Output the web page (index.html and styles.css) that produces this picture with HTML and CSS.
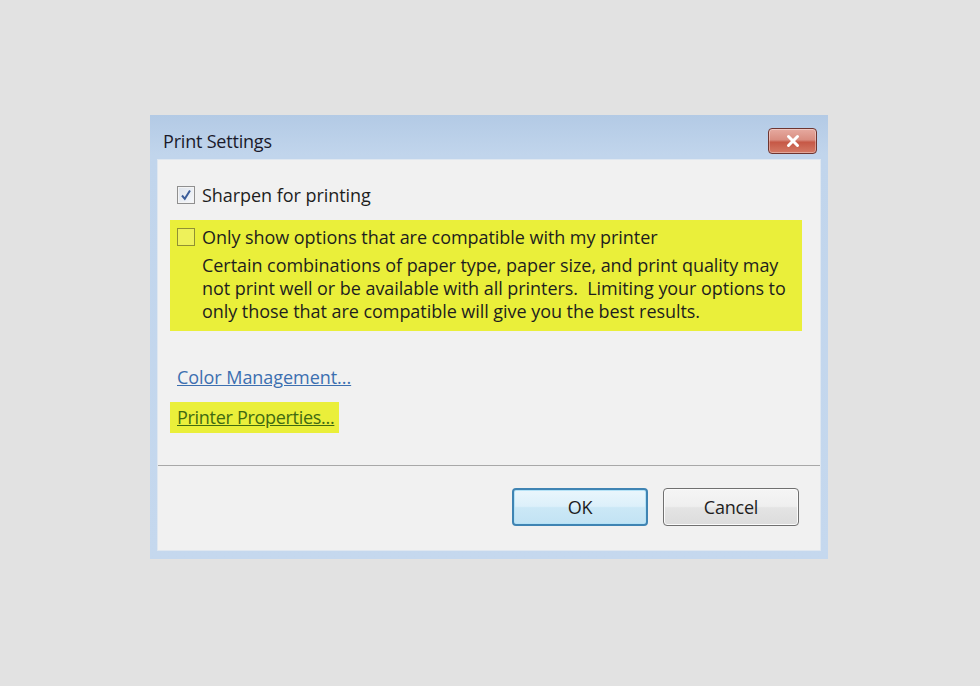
FILE: index.html
```html
<!DOCTYPE html>
<html>
<head>
<meta charset="utf-8">
<link rel="stylesheet" href="styles.css">
</head>
<body>
<div class="stage">
  <div class="window">
    <div class="titlebar">
      <span class="title">Print Settings</span>
      <div class="close"><svg width="18" height="14" viewBox="0 0 18 14"><path d="M4.5 2.5 L13.5 11.5 M13.5 2.5 L4.5 11.5" stroke="#ffffff" stroke-width="3" stroke-linecap="round"/></svg></div>
    </div>
    <div class="content">
      <div class="main">
        <label class="row sharpen">
          <span class="check checked"><svg width="12" height="12" viewBox="0 0 12 12"><path d="M2 6.5 L4.8 9.8 L10 1.5" fill="none" stroke="#3b5d9a" stroke-width="2"/></svg></span>
          <span>Sharpen for printing</span>
        </label>
        <div class="highlight box">
          <div class="row">
            <span class="check empty"></span>
            <span>Only show options that are compatible with my printer</span>
          </div>
          <p class="desc">Certain combinations of paper type, paper size, and print quality may not print well or be available with all printers.&nbsp; Limiting your options to only those that are compatible will give you the best results.</p>
        </div>
        <a class="link color">Color Management...</a>
        <div class="highlight linkbox"><a class="link printer">Printer Properties...</a></div>
      </div>
      <div class="footer">
        <button class="btn ok">OK</button>
        <button class="btn cancel">Cancel</button>
      </div>
    </div>
  </div>
</div>
</body>
</html>
```

FILE: styles.css
```css
html, body {
  margin: 0;
  padding: 0;
}
body {
  background: #e2e2e2;
  width: 980px;
  height: 686px;
  overflow: hidden;
  font-family: "Open Sans", "Noto Sans", sans-serif;
  color: #1e1e1e;
}
.stage {
  padding: 115px 0 0 150px;
}
.window {
  width: 678px;
  height: 444px;
  box-sizing: border-box;
  background: linear-gradient(to bottom, #b3cae5 0%, #c1d5ec 40px, #c5d8ee 100%);
  display: flex;
  flex-direction: column;
  padding: 0 7px 8px 7px;
}
.titlebar {
  height: 44px;
  box-sizing: border-box;
  padding: 8px 4px 0 6px;
  display: flex;
  align-items: center;
  justify-content: space-between;
}
.title {
  font-size: 18px;
  color: #1a1a2a;
  letter-spacing: -0.2px;
}
.close {
  width: 49px;
  height: 26px;
  box-sizing: border-box;
  border: 1px solid #6e3530;
  border-radius: 4px;
  background: linear-gradient(to bottom, #e6aaa0 0%, #d98d80 45%, #c65846 55%, #d47a66 100%);
  display: flex;
  align-items: center;
  justify-content: center;
  box-shadow: inset 0 0 0 1px rgba(255,255,255,0.35);
}
.content {
  flex: 1;
  background: #f1f1f1;
  border: 1px solid #dfe7f0;
  display: flex;
  flex-direction: column;
}
.main {
  flex: 1;
  border-bottom: 1px solid #a8a8a8;
  padding-top: 25px;
  padding-left: 19px;
  display: flex;
  flex-direction: column;
  align-items: flex-start;
}
.row {
  display: flex;
  align-items: center;
  font-size: 18px;
  letter-spacing: -0.05px;
  height: 20px;
}
.check {
  width: 18px;
  height: 18px;
  box-sizing: border-box;
  margin-right: 7px;
  display: flex;
  align-items: center;
  justify-content: center;
}
.check.checked {
  border: 1px solid #8f8f8f;
  background: linear-gradient(to bottom right, #dde3ec, #f6f8fb);
  box-shadow: inset 0 0 0 1px #f4f4f4;
}
.check.empty {
  border: 1px solid #909033;
  background: #eef15a;
}
.highlight {
  background: #eaef3a;
}
.box {
  margin-top: 15px;
  margin-left: -7px;
  width: 632px;
  box-sizing: border-box;
  padding: 7px 10px 0 7px;
  height: 111px;
}
.desc {
  margin: 7px 0 0 25px;
  width: 596px;
  font-size: 18px;
  letter-spacing: -0.05px;
  line-height: 23px;
  color: #1e1e1e;
}
.link {
  font-size: 18px;
  letter-spacing: -0.05px;
  text-decoration: underline;
  cursor: pointer;
}
.color {
  margin-top: 34px;
  color: #3c6fb0;
}
.linkbox {
  margin-top: 13px;
  margin-left: -7px;
  padding: 3px 5px 4px 7px;
}
.printer {
  color: #3f6a12;
  letter-spacing: -0.3px;
}
.footer {
  height: 84px;
  display: flex;
  justify-content: flex-end;
  align-items: flex-start;
  padding-top: 22px;
  padding-right: 21px;
  box-sizing: border-box;
  gap: 15px;
}
.btn {
  width: 136px;
  height: 38px;
  font-family: "Open Sans", "Noto Sans", sans-serif;
  font-size: 18px;
  color: #1e1e1e;
  border-radius: 4px;
  letter-spacing: -0.2px;
}
.ok {
  border: 2px solid #3f84b3;
  background: linear-gradient(to bottom, #eaf6fc 0%, #dcf0fa 48%, #cbe8f6 52%, #c2e3f4 100%);
  box-shadow: inset 0 0 0 1px #b5e2f6;
}
.cancel {
  border: 1px solid #707070;
  background: linear-gradient(to bottom, #f5f5f5 0%, #efefef 48%, #e4e4e4 52%, #dcdcdc 100%);
  box-shadow: inset 0 0 0 1px #fbfbfb;
}
```
